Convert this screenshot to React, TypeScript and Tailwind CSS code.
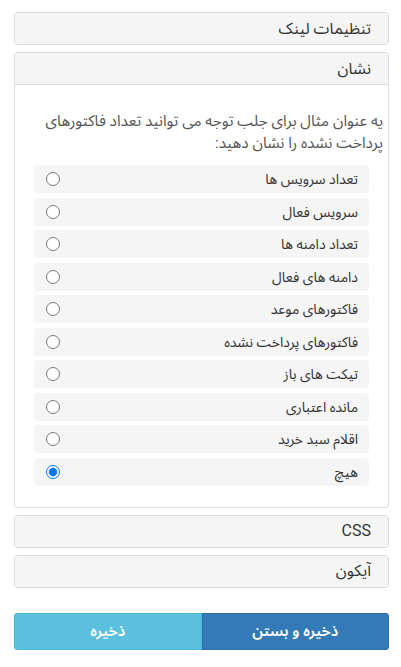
import React from "react";

const options = [
  "تعداد سرویس ها",
  "سرویس فعال",
  "تعداد دامنه ها",
  "دامنه های فعال",
  "فاکتورهای موعد",
  "فاکتورهای پرداخت نشده",
  "تیکت های باز",
  "مانده اعتباری",
  "اقلام سبد خرید",
  "هیچ",
];

function PanelHeader({ title }: { title: string }) {
  return (
    <div className="h-[31px] flex items-center pr-[17px] pl-[14px] bg-[#f5f5f5] text-[#333] text-[16px] leading-[20px]">
      {title}
    </div>
  );
}

export default function App() {
  return (
    <div
      dir="rtl"
      className="w-[401px] min-h-[667px] bg-white pr-[12px] pl-[14px] pt-[12px]"
      style={{ fontFamily: 'Roboto, "Noto Sans Arabic", sans-serif' }}
    >
      {/* Link settings */}
      <div className="border border-[#dddddd] rounded-[3px] overflow-hidden mb-[7px]">
        <PanelHeader title="تنظیمات لینک" />
      </div>

      {/* Badge */}
      <div className="border border-[#dddddd] rounded-[3px] overflow-hidden mb-[7px]">
        <div className="border-b border-[#dddddd]">
          <PanelHeader title="نشان" />
        </div>
        <div className="pt-[25px] pb-[21px]">
          <p className="pr-[5px] pl-[12px] text-[15.3px] leading-[22px] text-[#555]">
            یه عنوان مثال برای جلب توجه می توانید تعداد فاکتورهای پرداخت نشده را نشان دهید:
          </p>
          <div className="mt-[11px] mx-[19px] flex flex-col gap-[4.5px]">
            {options.map((o, i) => (
              <label
                key={o}
                className="h-[28px] flex items-center justify-between pr-[11px] pl-[12px] bg-[#f5f5f5] rounded-[4px] text-[14px] leading-[20px] text-[#333]"
              >
                <span>{o}</span>
                <input
                  type="radio"
                  name="badge"
                  defaultChecked={i === options.length - 1}
                  className="w-[14px] h-[14px] m-0"
                />
              </label>
            ))}
          </div>
        </div>
      </div>

      {/* CSS */}
      <div className="border border-[#dddddd] rounded-[3px] overflow-hidden mb-[7px]">
        <PanelHeader title="CSS" />
      </div>

      {/* Icon */}
      <div className="border border-[#dddddd] rounded-[3px] overflow-hidden">
        <PanelHeader title="آیکون" />
      </div>

      <div className="mt-[25px] flex h-[37px] rounded-[4px] overflow-hidden">
        <button className="flex-1 bg-[#337ab7] border border-[#2e6da4] text-white text-[15px] font-semibold">
          ذخیره و بستن
        </button>
        <button className="flex-1 bg-[#5bc0de] border border-[#46b8da] text-white text-[15px] font-semibold">
          ذخیره
        </button>
      </div>
    </div>
  );
}
